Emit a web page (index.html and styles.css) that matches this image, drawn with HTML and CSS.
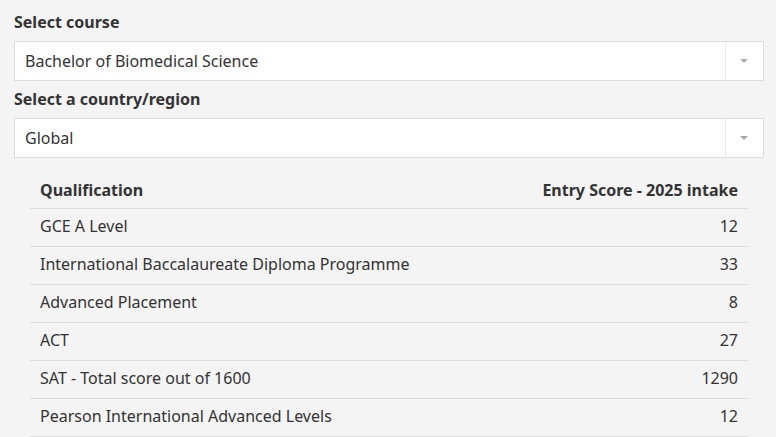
FILE: index.html
```html
<!DOCTYPE html>
<html lang="en">
<head>
    <meta charset="UTF-8">
    <meta name="viewport" content="width=device-width, initial-scale=1.0">
    <title>Entry Scores</title>
    <link rel="stylesheet" href="styles.css">
</head>
<body>
    <div class="container">
        <label class="field-label">Select course</label>
        <div class="select-box">
            <span class="select-value">Bachelor of Biomedical Science</span>
            <span class="select-arrow"></span>
        </div>
        <label class="field-label">Select a country/region</label>
        <div class="select-box">
            <span class="select-value">Global</span>
            <span class="select-arrow"></span>
        </div>
        <table class="scores">
            <thead>
                <tr>
                    <th>Qualification</th>
                    <th class="num">Entry Score - 2025 intake</th>
                </tr>
            </thead>
            <tbody>
                <tr><td>GCE A Level</td><td class="num">12</td></tr>
                <tr><td>International Baccalaureate Diploma Programme</td><td class="num">33</td></tr>
                <tr><td>Advanced Placement</td><td class="num">8</td></tr>
                <tr><td>ACT</td><td class="num">27</td></tr>
                <tr><td>SAT - Total score out of 1600</td><td class="num">1290</td></tr>
                <tr><td>Pearson International Advanced Levels</td><td class="num">12</td></tr>
            </tbody>
        </table>
    </div>
</body>
</html>
```

FILE: styles.css
```css
body {
    margin: 0;
    font-family: "Noto Sans", "Open Sans", sans-serif;
    font-size: 16px;
    color: #333;
    background-color: #f4f4f4;
}
.container {
    padding: 10px 12px 0 14px;
}
.field-label {
    display: block;
    font-weight: bold;
    line-height: 24px;
    margin-bottom: 7px;
}
.select-box {
    display: flex;
    align-items: stretch;
    height: 38px;
    background-color: white;
    border: 1px solid #ddd;
    margin-bottom: 6px;
}
.select-value {
    flex: 1;
    display: flex;
    align-items: center;
    padding-left: 10px;
}
.select-arrow {
    width: 37px;
    border-left: 1px solid #e8e8e8;
    position: relative;
}
.select-arrow::after {
    content: "";
    position: absolute;
    left: 14px;
    top: 17px;
    border-left: 4px solid transparent;
    border-right: 4px solid transparent;
    border-top: 4px solid #aaa;
}
.scores {
    width: 718px;
    margin: 14px 0 0 16px;
    border-collapse: collapse;
}
.scores th,
.scores td {
    text-align: left;
    padding: 0 10px;
    border-bottom: 1px solid #ddd;
}
.scores th {
    height: 36px;
}
.scores td {
    height: 38px;
    padding-bottom: 4px;
    box-sizing: border-box;
}
.scores .num {
    text-align: right;
}
```
